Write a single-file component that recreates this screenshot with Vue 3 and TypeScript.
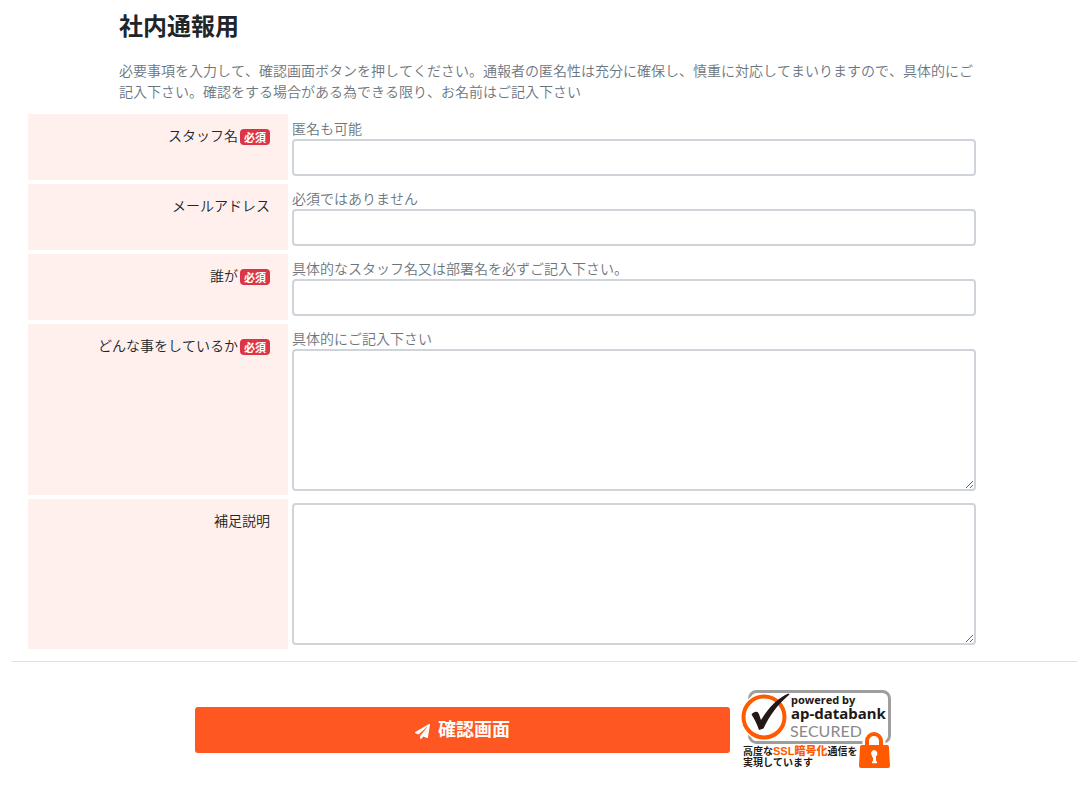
<script setup lang="ts">
import { reactive } from 'vue'

interface Field {
  id: string
  label: string
  required: boolean
  hint: string
  multiline: boolean
}

const fields: Field[] = [
  { id: 'staff', label: 'スタッフ名', required: true, hint: '匿名も可能', multiline: false },
  { id: 'mail', label: 'メールアドレス', required: false, hint: '必須ではありません', multiline: false },
  { id: 'who', label: '誰が', required: true, hint: '具体的なスタッフ名又は部署名を必ずご記入下さい。', multiline: false },
  { id: 'what', label: 'どんな事をしているか', required: true, hint: '具体的にご記入下さい', multiline: true },
  { id: 'note', label: '補足説明', required: false, hint: '', multiline: true },
]

const values = reactive<Record<string, string>>({ staff: '', mail: '', who: '', what: '', note: '' })
</script>

<template>
  <main class="page">
    <header class="intro">
      <h1>社内通報用</h1>
      <p>必要事項を入力して、確認画面ボタンを押してください。通報者の匿名性は充分に確保し、慎重に対応してまいりますので、具体的にご記入下さい。確認をする場合がある為できる限り、お名前はご記入下さい</p>
    </header>
    <form @submit.prevent>
      <div class="fields">
        <div v-for="f in fields" :key="f.id" class="row">
          <div class="name">
            <label :for="f.id">{{ f.label }}</label>
            <span v-if="f.required" class="badge">必須</span>
          </div>
          <div class="entry">
            <span v-if="f.hint" :id="f.id + '-hint'" class="hint">{{ f.hint }}</span>
            <textarea v-if="f.multiline" :id="f.id" v-model="values[f.id]" class="control area"></textarea>
            <input v-else :id="f.id" v-model="values[f.id]" class="control" type="text" />
          </div>
        </div>
      </div>
      <hr />
      <div class="actions">
        <button type="submit" class="submit">
          <svg class="plane" viewBox="0 0 512 512" aria-hidden="true">
            <path fill="currentColor" d="M476 3.200 12.500 270.600c-18.100 10.400-15.800 35.600 2.200 43.200L121 358.400l287.300-253.200c5.500-4.900 13.300 2.600 8.600 8.300L176 407v80.500c0 23.600 28.500 32.900 42.500 15.800L282 426l124.600 52.200c14.200 6 30.400-2.900 33-18.200l72-432C515 7.800 493.300-6.800 476 3.200z" />
          </svg>
          <span>確認画面</span>
        </button>
        <svg class="seal" viewBox="0 0 150 80" role="img" aria-label="powered by ap-databank SECURED">
          <rect x="8.500" y="1.500" width="140" height="51" rx="7" fill="#fff" stroke="#9e9e9f" stroke-width="3" />
          <circle cx="23" cy="27" r="24" fill="#fff" />
          <circle cx="23" cy="27" r="20.500" fill="none" stroke="#ff5a00" stroke-width="4" />
          <path d="M10.500 24.500C12 22.500 14 21.500 15.500 21.700 18 22 18.500 26 20 30 28 17 37 8 47.500 3.500l1 1C37 14 29 25 22.500 38.500L18 40C16 34 13.500 29 10.500 24.500z" fill="#231815" />
          <text class="latin" x="50" y="14" font-size="11">powered by</text>
          <text class="latin" x="50" y="29" font-size="15">ap-databank</text>
          <text class="secured" x="49" y="47" font-size="16">SECURED</text>
          <path d="M126 56v-5a7 7 0 0 1 14 0v5" fill="#fff" stroke="#fff" stroke-width="9" />
          <path d="M126 56v-5a7 7 0 0 1 14 0v5" fill="none" stroke="#ff5a00" stroke-width="4" />
          <path d="M121 55h25q2 0 2 2l1 19q0 2-2 2h-27q-2 0-2-2l1-19q0-2 2-2z" fill="#ff5a00" />
          <path d="M133 60a3.500 3.500 0 0 1 2 6.300v5h1v2h-5v-2h1v-4h-1v-1.500a3.500 3.500 0 0 1 2-5.800z" fill="#fff" />
          <text class="note" x="2" y="65">高度な<tspan class="accent">SSL暗号化</tspan>通信を</text>
          <text class="note" x="2" y="76">実現しています</text>
        </svg>
      </div>
    </form>
  </main>
</template>

<style>
body {
  margin: 0;
  background: #fff;
}
</style>

<style scoped>
.page {
  box-sizing: border-box;
  padding: 7px 0 24px 12px;
  color: #212529;
  font-family: "Noto Sans CJK JP", "Noto Sans", sans-serif;
  font-size: 14px;
  font-weight: 350;
  line-height: 21px;
  text-spacing-trim: space-all;
  font-kerning: none;
}

.intro {
  margin: 0 100px 0 107px;
}

h1 {
  margin: 0 0 17px;
  font-size: 24px;
  line-height: 36px;
  font-weight: 700;
}

.intro p {
  margin: 0;
  color: #6c757d;
  line-break: strict;
}

.fields {
  display: grid;
  gap: 4px;
  margin: 12px 101px 0 16px;
}

.row {
  display: grid;
  grid-template-columns: 260px 1fr;
  column-gap: 4px;
}

.name {
  display: flex;
  align-items: flex-start;
  justify-content: flex-end;
  gap: 2px;
  padding: 11px 18px 0 0;
  background: #fff0ed;
}

.badge {
  box-sizing: border-box;
  margin-top: 4px;
  padding: 0 4px;
  border-radius: 4px;
  background: #dc3545;
  color: #fff;
  font-size: 11px;
  line-height: 16px;
  font-weight: 700;
}

.entry {
  display: flex;
  flex-direction: column;
  padding: 4px 0;
}

.hint {
  color: #6c757d;
}

.control {
  box-sizing: border-box;
  display: block;
  width: 100%;
  height: 37px;
  margin: 0;
  padding: 6px 12px;
  border: 2px solid #ced4da;
  border-radius: 4px;
  background: #fff;
  color: #495057;
  font: inherit;
  outline: none;
}

.area {
  height: 142px;
  resize: vertical;
}

hr {
  height: 1px;
  margin: 12px 0 28px;
  border: 0;
  background: #dee0e1;
}

.actions {
  display: flex;
  align-items: center;
  gap: 11px;
  margin: 0 186px 0 183px;
}

.submit {
  display: flex;
  flex: 1;
  align-items: center;
  justify-content: center;
  gap: 8px;
  height: 46px;
  padding: 0 0 3px;
  border: 0;
  border-radius: 3px;
  background: #ff5722;
  color: #fff;
  font: inherit;
  font-size: 18px;
  font-weight: 700;
  cursor: pointer;
}

.plane {
  width: 15px;
  height: 15px;
  margin-top: 6px;
}

.seal {
  flex: none;
  width: 150px;
  height: 80px;
}

.latin {
  fill: #231815;
  font-family: "Noto Sans", sans-serif;
  font-weight: 700;
}

.secured {
  fill: #898989;
  font-family: Lato, sans-serif;
  font-weight: 400;
}

.note {
  fill: #231815;
  font-size: 10px;
  font-weight: 700;
}

.accent {
  fill: #ff5a00;
  font-family: "Liberation Sans", "Noto Sans CJK JP", sans-serif;
  font-size: 11px;
  font-weight: 900;
}
</style>
